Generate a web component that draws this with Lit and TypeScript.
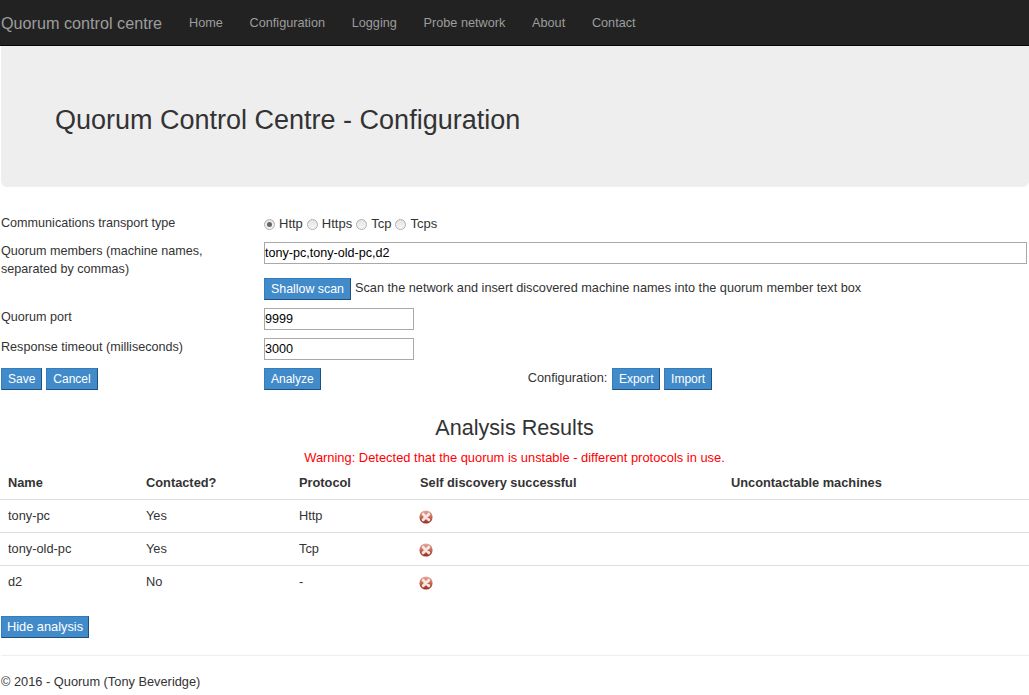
import { LitElement, html, css, svg } from 'lit'
import { customElement } from 'lit/decorators.js'

const errorIcon = svg`<svg class="err" viewBox="0 0 14 14" width="14" height="14" aria-hidden="true">
	<defs>
		<linearGradient id="g" x1="0" y1="0" x2="0" y2="1">
			<stop offset="0" stop-color="#e4aca0" />
			<stop offset="0.5" stop-color="#c86a58" />
			<stop offset="1" stop-color="#982a1c" />
		</linearGradient>
	</defs>
	<circle cx="7" cy="7" r="6.6" fill="url(#g)" />
	<path d="M4.2 4.2 9.8 9.8M9.8 4.2 4.2 9.8" stroke="#f8e6e2" stroke-width="3" stroke-linecap="round" />
</svg>`

const rows = [
	['tony-pc', 'Yes', 'Http'],
	['tony-old-pc', 'Yes', 'Tcp'],
	['d2', 'No', '-'],
]

const navLinks = ['Home', 'Configuration', 'Logging', 'Probe network', 'About', 'Contact']

@customElement('app-root')
export class AppRoot extends LitElement {
	static styles = css`
		:host {
			display: block;
			font-family: 'Liberation Sans', Arial, sans-serif;
			font-size: 12.8px;
			line-height: 20px;
			color: #333;
			background: #fff;
			min-height: 695px;
		}

		.navbar {
			display: flex;
			height: 45px;
			background: #222;
			border-bottom: 1px solid #080808;
			padding-left: 1px;
		}
		.brand {
			font-size: 16.2px;
			line-height: 46px;
			color: #9d9d9d;
			width: 174px;
		}
		.nav {
			display: flex;
			gap: 26.7px;
			padding-left: 14px;
			font-size: 12.7px;
			line-height: 46px;
			color: #9d9d9d;
		}

		.page {
			padding-left: 1px;
		}

		.jumbotron {
			height: 141px;
			box-sizing: border-box;
			background: #eee;
			border-radius: 0 0 6px 6px;
			padding: 58px 0 0 54px;
		}
		h1 {
			margin: 0;
			font-size: 27px;
			font-weight: 400;
			line-height: 33px;
		}

		.form {
			display: grid;
			grid-template-columns: 263px 1fr;
			padding-top: 26px;
			font-size: 12.6px;
		}
		.transport {
			display: flex;
			align-items: center;
			height: 20px;
			margin-top: 1px;
			gap: 4px;
			font-size: 13px;
		}
		.radio {
			width: 11px;
			height: 11px;
			box-sizing: border-box;
			border: 1px solid #b0b0b0;
			border-radius: 50%;
			background: linear-gradient(#e4e4e4, #f6f6f6);
			display: flex;
			align-items: center;
			justify-content: center;
		}
		.radio.on::after {
			content: '';
			width: 5px;
			height: 5px;
			border-radius: 50%;
			background: #666;
		}
		.opt {
			display: flex;
			align-items: center;
			gap: 4px;
		}
		.input {
			box-sizing: border-box;
			height: 22px;
			border: 1px solid #a9a9a9;
			color: #000;
			font-size: 12.6px;
			line-height: 20px;
		}
		.input.wide {
			width: 763px;
		}
		.input.short {
			width: 150px;
		}
		.btn {
			display: inline-block;
			box-sizing: border-box;
			height: 22px;
			padding: 0 6px;
			background: #428bca;
			border: 1px solid #357ebd;
			border-bottom-color: #1f4f7a;
			border-right-color: #1f4f7a;
			color: #fff;
			font-size: 12px;
			font-weight: 400;
			line-height: 20px;
		}
		.btn.scan-btn {
			font-size: 12.4px;
		}
		.btn.hide-btn {
			font-size: 12.8px;
			padding: 0 5px;
		}
		.btn.export-btn {
			padding: 0 5.5px;
		}
		.members-label {
			padding-top: 8px;
			line-height: 18px;
		}
		.members {
			padding-top: 8px;
		}
		.scan {
			display: flex;
			gap: 4px;
			line-height: 20px;
			margin-top: 14px;
			height: 30px;
			font-size: 12.73px;
		}
		.field-label {
			line-height: 18px;
			height: 30px;
		}
		.field {
			height: 30px;
		}
		.actions {
			display: flex;
			gap: 4px;
		}
		.buttons {
			display: flex;
			height: 22px;
		}
		.config {
			display: flex;
			gap: 4px;
			margin-left: 207px;
			font-size: 12.8px;
		}
		.config-label {
			margin-right: 1px;
		}

		.results {
			margin-left: -1px;
			text-align: center;
		}
		h3 {
			margin: 0;
			padding-top: 24px;
			font-size: 21.6px;
			font-weight: 400;
			line-height: 28px;
		}
		.warning {
			color: #f00;
			font-size: 12.9px;
			line-height: 17px;
			padding-top: 7px;
		}

		.table {
			margin-left: -1px;
		}
		.tr {
			display: grid;
			grid-template-columns: 138px 153px 121px 311px 1fr;
			border-bottom: 1px solid #ddd;
			height: 33px;
			box-sizing: border-box;
			padding-left: 8px;
			align-items: center;
		}
		.tr.head {
			height: 34px;
			font-weight: 700;
		}
		.tr:last-child {
			border-bottom-color: transparent;
		}
		.err {
			display: block;
			margin: 2px 0 0 -1px;
		}

		.hide {
			margin-top: 17px;
		}
		hr {
			margin: 17px 0 0;
			border: none;
			border-top: 1px solid #eee;
		}
		footer {
			padding-top: 16px;
			line-height: 20px;
		}
	`

	render() {
		return html`
			<div class="navbar">
				<div class="brand">Quorum control centre</div>
				<div class="nav">${navLinks.map((l) => html`<span>${l}</span>`)}</div>
			</div>
			<div class="page">
				<div class="jumbotron"><h1>Quorum Control Centre - Configuration</h1></div>

				<div class="form">
					<div>Communications transport type</div>
					<div class="transport">
						<span class="opt"><span class="radio on"></span>Http</span>
						<span class="opt"><span class="radio"></span>Https</span>
						<span class="opt"><span class="radio"></span>Tcp</span>
						<span class="opt"><span class="radio"></span>Tcps</span>
					</div>
					<div class="members-label">Quorum members (machine names,<br />separated by commas)</div>
					<div class="members">
						<div class="input wide">tony-pc,tony-old-pc,d2</div>
						<div class="scan">
							<span class="btn scan-btn">Shallow scan</span>
							<span>Scan the network and insert discovered machine names into the quorum member text box</span>
						</div>
					</div>
					<div class="field-label">Quorum port</div>
					<div class="field"><div class="input short">9999</div></div>
					<div class="field-label">Response timeout (milliseconds)</div>
					<div class="field"><div class="input short">3000</div></div>
					<div class="actions">
						<span class="btn">Save</span>
						<span class="btn">Cancel</span>
					</div>
					<div class="buttons">
						<span class="btn">Analyze</span>
						<span class="config">
							<span class="config-label">Configuration:</span>
							<span class="btn export-btn">Export</span>
							<span class="btn">Import</span>
						</span>
					</div>
				</div>

				<div class="results">
					<h3>Analysis Results</h3>
					<div class="warning">Warning: Detected that the quorum is unstable - different protocols in use.</div>
				</div>

				<div class="table">
					<div class="tr head">
						<span>Name</span>
						<span>Contacted?</span>
						<span>Protocol</span>
						<span>Self discovery successful</span>
						<span>Uncontactable machines</span>
					</div>
					${rows.map(
						(r) => html`<div class="tr">
							<span>${r[0]}</span>
							<span>${r[1]}</span>
							<span>${r[2]}</span>
							<span>${errorIcon}</span>
							<span></span>
						</div>`,
					)}
				</div>

				<div class="hide"><span class="btn hide-btn">Hide analysis</span></div>
				<hr />
				<footer>© 2016 - Quorum (Tony Beveridge)</footer>
			</div>
		`
	}
}
